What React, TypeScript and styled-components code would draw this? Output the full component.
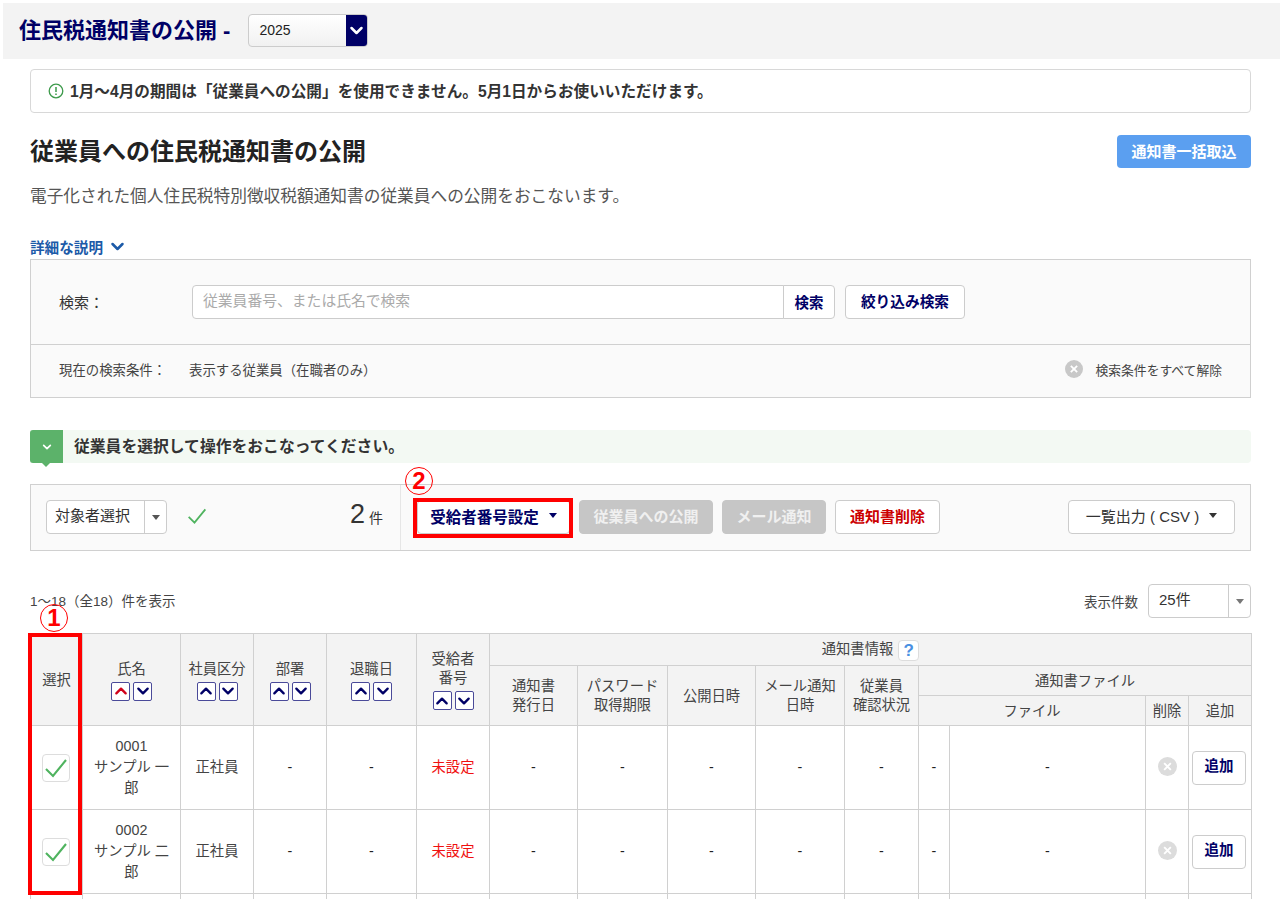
import React from "react";
import styled, { createGlobalStyle } from "styled-components";

const NAVY = "#000066";
const LINE = "#d0d0d0";

const GlobalStyle = createGlobalStyle`
  html, body {
    margin: 0;
    padding: 0;
    background: #fff;
    font-family: "Liberation Sans", "Noto Sans CJK JP", sans-serif;
    color: #333;
  }
  * { box-sizing: border-box; }
`;

const Page = styled.div`
  width: 1280px;
  height: 899px;
  overflow: hidden;
  padding-top: 3px;
`;

const TopBar = styled.header`
  margin-left: 3px;
  height: 56px;
  background: #f3f3f3;
  display: flex;
  align-items: center;
  padding: 0 16px 1px;
  gap: 18px;
`;

const TopTitle = styled.h1`
  margin: 0;
  font-size: 22px;
  line-height: 28px;
  font-weight: 700;
  color: ${NAVY};
`;

const YearSelect = styled.div`
  width: 120px;
  height: 33px;
  display: flex;
  border: 1px solid #ccc;
  border-radius: 4px;
  background: linear-gradient(#fff, #f1f1f1);
  overflow: hidden;
  font-size: 14px;
  color: #222;
`;

const YearValue = styled.span`
  flex: 1;
  padding-left: 10px;
  line-height: 31px;
`;

const YearArrow = styled.span`
  width: 21px;
  background: ${NAVY};
  display: flex;
  align-items: center;
  justify-content: center;
`;

const Main = styled.main`
  padding: 10px 29px 0 30px;
`;

const Notice = styled.div`
  height: 44px;
  border: 1px solid #d8d8d8;
  border-radius: 4px;
  display: flex;
  align-items: center;
  gap: 6px;
  padding: 0 0 1px 17px;
  font-size: 15.65px;
  font-weight: 700;
  color: #333;
`;

const HeadingRow = styled.div`
  display: flex;
  justify-content: space-between;
  align-items: center;
  margin-top: 22px;
  height: 33px;
`;

const Heading = styled.h2`
  margin: 0 0 4px;
  font-size: 24px;
  font-weight: 700;
  color: #222;
`;

const ImportButton = styled.button`
  width: 134px;
  height: 33px;
  padding: 0 0 3px;
  border: 0;
  border-radius: 4px;
  background: #5b9ff0;
  color: #fff;
  font: inherit;
  font-size: 15px;
  font-weight: 700;
`;

const Description = styled.p`
  margin: 15px 0 0;
  font-size: 16.7px;
  line-height: 28px;
  color: #555;
`;

const DetailLink = styled.a`
  display: flex;
  align-items: center;
  gap: 7px;
  margin-top: 24px;
  height: 22px;
  font-size: 14.6px;
  font-weight: 700;
  color: #1c5aa8;
`;

const SearchPanel = styled.section`
  margin-top: 2px;
  height: 139px;
  border: 1px solid ${LINE};
  background: #fafafa;
`;

const SearchRow = styled.div`
  height: 85px;
  display: flex;
  align-items: center;
  padding: 0 0 0 28px;
  border-bottom: 1px solid ${LINE};
`;

const SearchLabel = styled.span`
  width: 133px;
  font-size: 15px;
  color: #333;
  margin-bottom: 2px;
`;

const SearchInput = styled.div`
  width: 592px;
  height: 34px;
  border: 1px solid #ccc;
  border-radius: 4px 0 0 4px;
  background: #fff;
  padding-left: 10px;
  font-size: 14.8px;
  line-height: 30px;
  color: #aaa;
`;

const SearchButton = styled.button`
  width: 52px;
  height: 34px;
  margin-left: -1px;
  padding: 0 0 2px;
  border: 1px solid #ccc;
  border-radius: 0 4px 4px 0;
  background: #fff;
  font: inherit;
  font-size: 14.5px;
  font-weight: 700;
  color: ${NAVY};
`;

const FilterButton = styled.button`
  width: 120px;
  height: 34px;
  margin-left: 10px;
  padding: 0 0 3px;
  border: 1px solid #ccc;
  border-radius: 4px;
  background: #fff;
  font: inherit;
  font-size: 14.7px;
  font-weight: 700;
  color: ${NAVY};
`;

const ConditionRow = styled.div`
  height: 52px;
  display: flex;
  align-items: center;
  padding: 0 28px 4px;
  font-size: 13.4px;
  color: #444;
`;

const ConditionLabel = styled.span`
  width: 130px;
`;

const ClearAll = styled.span`
  margin-left: auto;
  display: flex;
  align-items: center;
  gap: 12px;
  font-size: 12.8px;
`;

const GuideBar = styled.div`
  margin-top: 32px;
  height: 33px;
  display: flex;
  align-items: center;
  gap: 11px;
  background: #f3f9f3;
  border-radius: 0 4px 4px 0;
  font-size: 15.8px;
  font-weight: 700;
  color: #333;
`;

const GuideText = styled.span`
  margin-bottom: 3px;
`;

const GuideTab = styled.span`
  position: relative;
  width: 33px;
  height: 33px;
  background: #5cb26a;
  border-radius: 3px 0 0 3px;
  display: flex;
  align-items: center;
  justify-content: center;
  &::after {
    content: "";
    position: absolute;
    left: 12px;
    top: 33px;
    border: 4px solid transparent;
    border-top-color: #5cb26a;
    border-bottom: 0;
  }
`;

const ActionPanel = styled.section`
  margin-top: 21px;
  height: 67px;
  display: flex;
  border: 1px solid ${LINE};
  background: #fafafa;
`;

const TargetArea = styled.div`
  width: 370px;
  display: flex;
  align-items: center;
  padding: 0 17px 1px 15px;
  border-right: 1px solid #e6e6e6;
`;

const ComboBox = styled.div<{ $width: number }>`
  width: ${(p) => p.$width}px;
  height: 34px;
  display: flex;
  border: 1px solid #ccc;
  border-radius: 4px;
  background: #fff;
  font-size: 15px;
  color: #333;
`;

const ComboValue = styled.span<{ $pad?: number }>`
  flex: 1;
  padding-left: ${(p) => p.$pad ?? 8}px;
  line-height: 30px;
`;

const ComboArrow = styled.span`
  width: 22px;
  border-left: 1px solid #ccc;
  display: flex;
  align-items: center;
  justify-content: center;
`;

const Caret = styled.i<{ $color?: string }>`
  display: inline-block;
  border: 4px solid transparent;
  border-top: 5px solid ${(p) => p.$color ?? "#555"};
  border-bottom: 0;
`;

const CheckMark = styled.span`
  margin: 0 0 3px 20px;
  display: flex;
`;

const Count = styled.span`
  margin-left: auto;
  font-size: 27px;
  line-height: 30px;
  color: #333;
  display: flex;
  align-items: baseline;
  gap: 4px;
  margin-bottom: 3px;
`;

const CountUnit = styled.span`
  font-size: 14px;
`;

const ActionArea = styled.div`
  flex: 1;
  display: flex;
  align-items: center;
  gap: 9px;
  padding: 0 15px 1px 16px;
`;

const ActionButton = styled.button<{ $tone?: "navy" | "off" | "red" | "plain"; $width: number }>`
  position: relative;
  width: ${(p) => p.$width}px;
  height: 34px;
  padding: 0 0 3px;
  border-radius: 4px;
  font: inherit;
  font-size: ${(p) => (p.$tone === "navy" ? 15.5 : 15)}px;
  font-weight: ${(p) => (p.$tone === "plain" ? 400 : 700)};
  display: flex;
  align-items: center;
  justify-content: center;
  gap: 10px;
  border: 1px solid ${(p) => (p.$tone === "off" ? "#c6c6c6" : "#ccc")};
  background: ${(p) => (p.$tone === "off" ? "#c6c6c6" : "#fff")};
  color: ${(p) =>
    p.$tone === "off" ? "#f0f0f0" : p.$tone === "red" ? "#cc0000" : p.$tone === "plain" ? "#333" : NAVY};
`;

const ExportWrap = styled.div`
  margin-left: auto;
`;

const RedFrame = styled.span`
  position: absolute;
  left: -5px;
  right: -4px;
  top: -3px;
  bottom: -5px;
  border: 4px solid #f00;
  pointer-events: none;
`;

const Marker = styled.span`
  position: absolute;
  width: 28px;
  height: 28px;
  border: 1px solid #f00;
  border-radius: 50%;
  color: #f00;
  font-size: 24px;
  line-height: 26px;
  font-weight: 700;
  text-align: center;
`;

const MarkerTwo = styled(Marker)`
  left: -13px;
  top: -34px;
`;

const ListHead = styled.div`
  margin-top: 33px;
  height: 34px;
  display: flex;
  align-items: center;
  justify-content: space-between;
  font-size: 13.5px;
  color: #444;
`;

const ListCount = styled.span`
  margin-bottom: 3px;
`;

const PageSize = styled.div`
  display: flex;
  align-items: center;
  gap: 10px;
`;

const TableWrap = styled.div`
  position: relative;
  margin-top: 15px;
`;

const SelectFrame = styled.span`
  position: absolute;
  left: -2px;
  top: 0;
  width: 54px;
  height: 262px;
  border: 4px solid #f00;
  pointer-events: none;
`;

const MarkerOne = styled(Marker)`
  left: 10px;
  top: -29px;
`;

const Table = styled.table`
  width: 1221px;
  table-layout: fixed;
  border-collapse: collapse;
  font-size: 14.3px;
  color: #444;
`;

const Th = styled.th<{ $h?: number }>`
  height: ${(p) => p.$h ?? 30}px;
  padding: 1px 0 0;
  border: 1px solid ${LINE};
  background: #f3f3f3;
  font-weight: 400;
  text-align: center;
  line-height: 19px;
  color: #444;
`;

const Td = styled.td<{ $red?: boolean }>`
  height: 84px;
  padding: 0;
  border: 1px solid ${LINE};
  text-align: center;
  line-height: 21px;
  color: ${(p) => (p.$red ? "#f01010" : "#444")};
`;

const Dash = styled(Td)`
  color: #222;
`;

const SortPair = styled.div`
  display: flex;
  justify-content: center;
  gap: 3px;
  margin-top: 3px;
`;

const SortButton = styled.span`
  width: 19px;
  height: 19px;
  border: 1px solid #4a4a99;
  border-radius: 2px;
  background: #fff;
  display: flex;
  align-items: center;
  justify-content: center;
`;

const HelpBadge = styled.span`
  display: inline-block;
  width: 21px;
  height: 21px;
  margin-left: 5px;
  border: 1px solid #ddd;
  border-radius: 4px;
  background: #fff;
  color: #4a90e2;
  font-size: 17px;
  line-height: 19px;
  font-weight: 700;
  vertical-align: middle;
`;

const CheckBox = styled.span`
  display: flex;
  width: 28px;
  height: 28px;
  margin-left: 11px;
  border: 1px solid #ddd;
  border-radius: 4px;
  align-items: center;
  justify-content: center;
`;

const DeleteIcon = styled.span`
  display: flex;
  justify-content: center;
  margin-bottom: 2px;
`;

const AddButton = styled.button`
  display: block;
  width: 54px;
  height: 34px;
  margin-left: 3px;
  padding: 0 0 2px;
  border: 1px solid #ccc;
  border-radius: 4px;
  background: #fff;
  font: inherit;
  font-size: 14.5px;
  font-weight: 700;
  color: ${NAVY};
`;

const Chevron = ({ up, color, size = 12, width = 2 }: { up?: boolean; color: string; size?: number; width?: number }) => (
  <svg width={size} height={size} viewBox="0 0 12 12" fill="none">
    <path
      d={up ? "M2 8 L6 4 L10 8" : "M2 4 L6 8 L10 4"}
      stroke={color}
      strokeWidth={width}
      strokeLinecap="round"
      strokeLinejoin="round"
    />
  </svg>
);

const Check = ({ size }: { size: number }) => (
  <svg width={size} height={size} viewBox="0 0 24 24" fill="none">
    <path d="M2 13 L9 20 L22 4" stroke="#4fb35f" strokeWidth="2.1" />
  </svg>
);

const ClearIcon = ({ size = 19, fill = "#dcdcdc" }: { size?: number; fill?: string }) => (
  <svg width={size} height={size} viewBox="0 0 20 20">
    <circle cx="10" cy="10" r="10" fill={fill} />
    <path d="M6.5 6.5 L13.5 13.5 M13.5 6.5 L6.5 13.5" stroke="#fff" strokeWidth="2" />
  </svg>
);

const Sort = ({ active }: { active?: boolean }) => (
  <SortPair>
    <SortButton>
      <Chevron up color={active ? "#d0021b" : NAVY} size={14} />
    </SortButton>
    <SortButton>
      <Chevron color={NAVY} size={14} />
    </SortButton>
  </SortPair>
);

const EMPLOYEES = [
  { no: "0001", first: "サンプル 一", last: "郎" },
  { no: "0002", first: "サンプル 二", last: "郎" },
];

const COLUMN_WIDTHS = [52, 98, 73, 73, 90, 73, 88, 90, 88, 89, 74, 31, 196, 43, 63];

export default function App() {
  return (
    <Page>
      <GlobalStyle />
      <TopBar>
        <TopTitle>住民税通知書の公開 -</TopTitle>
        <YearSelect>
          <YearValue>2025</YearValue>
          <YearArrow>
            <Chevron color="#fff" size={15} />
          </YearArrow>
        </YearSelect>
      </TopBar>
      <Main>
        <Notice>
          <svg width="16" height="16" viewBox="0 0 16 16" fill="none">
            <circle cx="8" cy="8" r="6.8" stroke="#3d9a4b" strokeWidth="1.3" />
            <path d="M8 4 V9 M8 10.6 V12" stroke="#3d9a4b" strokeWidth="1.5" />
          </svg>
          1月～4月の期間は「従業員への公開」を使用できません。5月1日からお使いいただけます。
        </Notice>
        <HeadingRow>
          <Heading>従業員への住民税通知書の公開</Heading>
          <ImportButton>通知書一括取込</ImportButton>
        </HeadingRow>
        <Description>電子化された個人住民税特別徴収税額通知書の従業員への公開をおこないます。</Description>
        <DetailLink>
          詳細な説明
          <Chevron color="#1c5aa8" size={15} />
        </DetailLink>
        <SearchPanel>
          <SearchRow>
            <SearchLabel>検索：</SearchLabel>
            <SearchInput>従業員番号、または氏名で検索</SearchInput>
            <SearchButton>検索</SearchButton>
            <FilterButton>絞り込み検索</FilterButton>
          </SearchRow>
          <ConditionRow>
            <ConditionLabel>現在の検索条件：</ConditionLabel>
            表示する従業員（在職者のみ）
            <ClearAll>
              <ClearIcon size={18} fill="#c8c8c8" />
              検索条件をすべて解除
            </ClearAll>
          </ConditionRow>
        </SearchPanel>
        <GuideBar>
          <GuideTab>
            <Chevron color="#fff" size={10} />
          </GuideTab>
          <GuideText>従業員を選択して操作をおこなってください。</GuideText>
        </GuideBar>
        <ActionPanel>
          <TargetArea>
            <ComboBox $width={121}>
              <ComboValue>対象者選択</ComboValue>
              <ComboArrow>
                <Caret />
              </ComboArrow>
            </ComboBox>
            <CheckMark>
              <Check size={20} />
            </CheckMark>
            <Count>
              2<CountUnit>件</CountUnit>
            </Count>
          </TargetArea>
          <ActionArea>
            <ActionButton $tone="navy" $width={153}>
              受給者番号設定
              <Caret $color={NAVY} />
              <RedFrame />
              <MarkerTwo>2</MarkerTwo>
            </ActionButton>
            <ActionButton $tone="off" $width={134}>
              従業員への公開
            </ActionButton>
            <ActionButton $tone="off" $width={104}>
              メール通知
            </ActionButton>
            <ActionButton $tone="red" $width={105}>
              通知書削除
            </ActionButton>
            <ExportWrap>
              <ActionButton $tone="plain" $width={167}>
                一覧出力 ( CSV )
                <Caret $color="#333" />
              </ActionButton>
            </ExportWrap>
          </ActionArea>
        </ActionPanel>
        <ListHead>
          <ListCount>1～18（全18）件を表示</ListCount>
          <PageSize>
            表示件数
            <ComboBox $width={103}>
              <ComboValue $pad={10}>25件</ComboValue>
              <ComboArrow>
                <Caret $color="#777" />
              </ComboArrow>
            </ComboBox>
          </PageSize>
        </ListHead>
        <TableWrap>
          <MarkerOne>1</MarkerOne>
          <Table>
            <colgroup>
              {COLUMN_WIDTHS.map((w, i) => (
                <col key={i} width={w} />
              ))}
            </colgroup>
            <thead>
              <tr>
                <Th rowSpan={3}>選択</Th>
                <Th rowSpan={3}>
                  氏名
                  <Sort active />
                </Th>
                <Th rowSpan={3}>
                  社員区分
                  <Sort />
                </Th>
                <Th rowSpan={3}>
                  部署
                  <Sort />
                </Th>
                <Th rowSpan={3}>
                  退職日
                  <Sort />
                </Th>
                <Th rowSpan={3}>
                  受給者
                  <br />
                  番号
                  <Sort />
                </Th>
                <Th colSpan={9} $h={32}>
                  通知書情報
                  <HelpBadge>?</HelpBadge>
                </Th>
              </tr>
              <tr>
                <Th rowSpan={2}>
                  通知書
                  <br />
                  発行日
                </Th>
                <Th rowSpan={2}>
                  パスワード
                  <br />
                  取得期限
                </Th>
                <Th rowSpan={2}>公開日時</Th>
                <Th rowSpan={2}>
                  メール通知
                  <br />
                  日時
                </Th>
                <Th rowSpan={2}>
                  従業員
                  <br />
                  確認状況
                </Th>
                <Th colSpan={4} $h={30}>
                  通知書ファイル
                </Th>
              </tr>
              <tr>
                <Th colSpan={2} $h={30}>
                  ファイル
                </Th>
                <Th>削除</Th>
                <Th>追加</Th>
              </tr>
            </thead>
            <tbody>
              {EMPLOYEES.map((emp) => (
                <tr key={emp.no}>
                  <Td>
                    <CheckBox>
                      <Check size={24} />
                    </CheckBox>
                  </Td>
                  <Td>
                    {emp.no}
                    <br />
                    {emp.first}
                    <br />
                    {emp.last}
                  </Td>
                  <Td>正社員</Td>
                  <Dash>-</Dash>
                  <Dash>-</Dash>
                  <Td $red>未設定</Td>
                  <Dash>-</Dash>
                  <Dash>-</Dash>
                  <Dash>-</Dash>
                  <Dash>-</Dash>
                  <Dash>-</Dash>
                  <Dash>-</Dash>
                  <Dash>-</Dash>
                  <Td>
                    <DeleteIcon>
                      <ClearIcon />
                    </DeleteIcon>
                  </Td>
                  <Td>
                    <AddButton>追加</AddButton>
                  </Td>
                </tr>
              ))}
              <tr>
                {COLUMN_WIDTHS.map((_, i) => (
                  <Td key={i} />
                ))}
              </tr>
            </tbody>
          </Table>
          <SelectFrame />
        </TableWrap>
      </Main>
    </Page>
  );
}
